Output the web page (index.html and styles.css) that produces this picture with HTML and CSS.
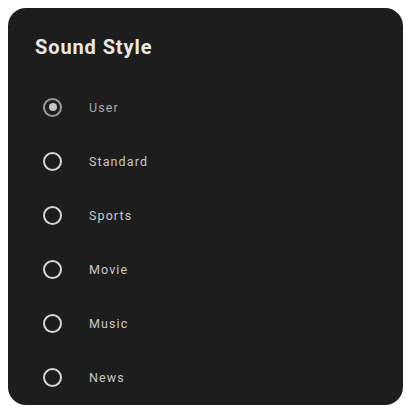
FILE: index.html
```html
<!DOCTYPE html>
<html>
<head>
<meta charset="utf-8">
<link rel="stylesheet" href="styles.css">
</head>
<body>
<div class="panel">
  <h1 class="title">Sound Style</h1>
  <ul class="options">
    <li class="option selected"><span class="radio"></span><span class="label">User</span></li>
    <li class="option"><span class="radio"></span><span class="label">Standard</span></li>
    <li class="option"><span class="radio"></span><span class="label">Sports</span></li>
    <li class="option"><span class="radio"></span><span class="label">Movie</span></li>
    <li class="option"><span class="radio"></span><span class="label">Music</span></li>
    <li class="option"><span class="radio"></span><span class="label">News</span></li>
  </ul>
</div>
</body>
</html>
```
FILE: styles.css
```css
html, body {
  margin: 0;
  padding: 0;
  background: #ffffff;
}
body {
  padding: 8px 4px 4px 8px;
  font-family: Roboto, "Noto Sans", sans-serif;
}
.panel {
  box-sizing: border-box;
  width: 395px;
  height: 397px;
  background: #1d1d1d;
  border-radius: 18px;
  padding: 27px 0 0 27px;
  overflow: hidden;
}
.title {
  margin: 0;
  font-size: 20px;
  font-weight: 700;
  color: #e8e8e8;
  line-height: 24px;
  letter-spacing: 0.9px;
}
.options {
  list-style: none;
  margin: 21px 0 0 0;
  padding: 0;
}
.option {
  display: flex;
  align-items: center;
  height: 54px;
}
.radio {
  box-sizing: border-box;
  width: 19px;
  height: 19px;
  margin-left: 8px;
  border: 2px solid #d6d6d6;
  border-radius: 50%;
  display: flex;
  align-items: center;
  justify-content: center;
}
.selected .radio {
  border-color: #9a9a9a;
}
.selected .radio::after {
  content: "";
  width: 8px;
  height: 8px;
  border-radius: 50%;
  background: #c4c4c4;
}
.label {
  margin-left: 27px;
  font-size: 12.5px;
  color: #c8c8c8;
  letter-spacing: 1.1px;
}
.selected .label {
  color: #a8a8a8;
}
```
